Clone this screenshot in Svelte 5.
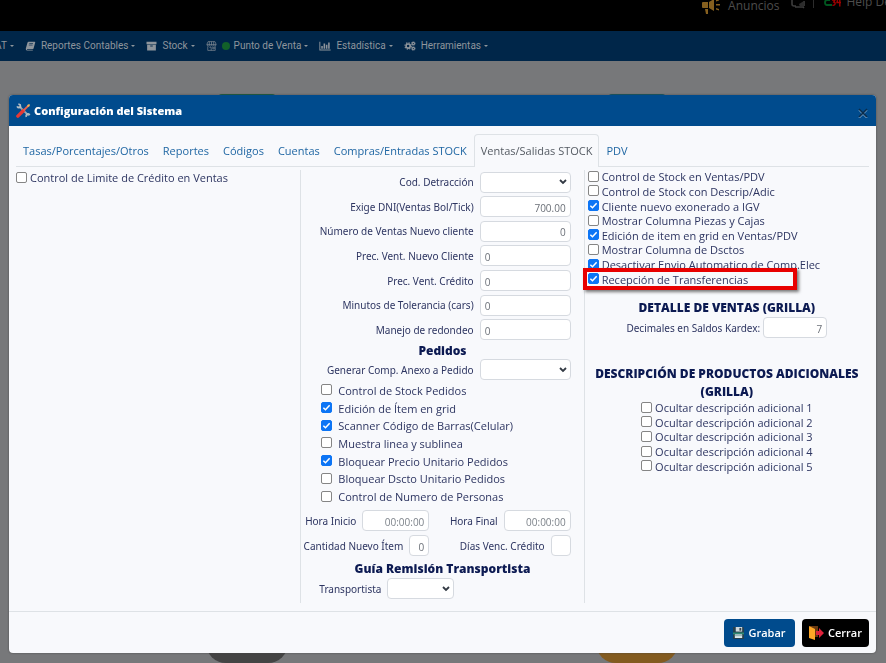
<script lang="ts">
  type Check = { id: string; label: string; checked: boolean; marked?: boolean };
  type Field = { id: string; label: string; value?: string; align?: 'left' | 'right'; select?: boolean };

  const menus = [
    { icon: '', label: 'AT' },
    { icon: 'book', label: 'Reportes Contables' },
    { icon: 'box', label: 'Stock' },
    { icon: 'store', label: 'Punto de Venta' },
    { icon: 'chart', label: 'Estadística' },
    { icon: 'cogs', label: 'Herramientas' }
  ];

  const tabs = [
    'Tasas/Porcentajes/Otros',
    'Reportes',
    'Códigos',
    'Cuentas',
    'Compras/Entradas STOCK',
    'Ventas/Salidas STOCK',
    'PDV'
  ];
  let active = $state('Ventas/Salidas STOCK');

  let credito: Check[] = $state([
    { id: 'limite', label: 'Control de Limite de Crédito en Ventas', checked: false }
  ]);

  let campos: Field[] = $state([
    { id: 'detraccion', label: 'Cod. Detracción', select: true },
    { id: 'dni', label: 'Exige DNI(Ventas Bol/Tick)', value: '700.00', align: 'right' },
    { id: 'nventas', label: 'Número de Ventas Nuevo cliente', value: '0', align: 'right' },
    { id: 'precnuevo', label: 'Prec. Vent. Nuevo Cliente', value: '0' },
    { id: 'preccred', label: 'Prec. Vent. Crédito', value: '0' },
    { id: 'tolerancia', label: 'Minutos de Tolerancia (cars)', value: '0' },
    { id: 'redondeo', label: 'Manejo de redondeo', value: '0' }
  ]);

  let pedidos: Check[] = $state([
    { id: 'stockped', label: 'Control de Stock Pedidos', checked: false },
    { id: 'edicion', label: 'Edición de Ítem en grid', checked: true },
    { id: 'scanner', label: 'Scanner Código de Barras(Celular)', checked: true },
    { id: 'linea', label: 'Muestra linea y sublinea', checked: false },
    { id: 'precio', label: 'Bloquear Precio Unitario Pedidos', checked: true },
    { id: 'dscto', label: 'Bloquear Dscto Unitario Pedidos', checked: false },
    { id: 'personas', label: 'Control de Numero de Personas', checked: false }
  ]);

  let ventas: Check[] = $state([
    { id: 'stockpdv', label: 'Control de Stock en Ventas/PDV', checked: false },
    { id: 'descrip', label: 'Control de Stock con Descrip/Adic', checked: false },
    { id: 'igv', label: 'Cliente nuevo exonerado a IGV', checked: true },
    { id: 'piezas', label: 'Mostrar Columna Piezas y Cajas', checked: false },
    { id: 'itempdv', label: 'Edición de item en grid en Ventas/PDV', checked: true },
    { id: 'dsctos', label: 'Mostrar Columna de Dsctos', checked: false },
    { id: 'envio', label: 'Desactivar Envio Automatico de Comp.Elec', checked: true },
    { id: 'transf', label: 'Recepción de Transferencias', checked: true, marked: true }
  ]);

  let ocultar: Check[] = $state(
    [1, 2, 3, 4, 5].map((n) => ({ id: `ocultar${n}`, label: `Ocultar descripción adicional ${n}`, checked: false }))
  );
</script>

{#snippet checks(items: Check[], kind: string)}
  <div class="checks {kind}">
    {#each items as item (item.id)}
      <div class="check" class:marked={item.marked}>
        <input type="checkbox" id={item.id} bind:checked={item.checked} />
        <label for={item.id}>{item.label}</label>
      </div>
    {/each}
  </div>
{/snippet}

{#snippet menuIcon(name: string)}
  {#if name === 'book'}
    <svg viewBox="0 0 16 16" class="icon"><path d="M5 1h9.500q1.500 0 1 1.500l-2.500 9q-.4 1.500-2 1.500H3q-1 0-.8.8.2.5 1 .5h8.500v1H2.500Q0 15 .5 12L3 3q.5-2 2-2z" /><path d="M6 4h6M5.300 6.500h6" stroke="#002649" /></svg>
  {:else if name === 'box'}
    <svg viewBox="0 0 16 16" class="icon"><path d="M0 1h16v4H0zM1 6h14v9H1z" /><path d="M6 8h4" stroke="#002649" stroke-width="1.500" /></svg>
  {:else if name === 'store'}
    <svg viewBox="0 0 16 16" class="icon line"><path d="M2.500 1h11l2 4.500H.5zM1 5.500v1.500q2 2 3.500 0 1.800 2 3.500 0 1.800 2 3.500 0 1.800 2 3.500 0V5.500M2 8.500V15h12V8.500M4.500 1v5M8 1v5M11.500 1v5M4.500 10h3v5M10 10h2.500v2.500H10z" /></svg>
    <span class="dot"></span>
  {:else if name === 'chart'}
    <svg viewBox="0 0 18 16" class="icon wide"><path d="M0 1h1.500v12.500H18V15H0zM3 8h2.500v4.500H3zM6.700 4h2.500v8.500H6.700zM10.400 6h2.500v6.500h-2.500zM14 2.500h2.500v10H14z" /></svg>
  {:else if name === 'cogs'}
    <svg viewBox="0 0 18 16" class="icon wide">
      <circle cx="6" cy="8" r="3.300" fill="none" stroke="currentColor" stroke-width="2.600" />
      <circle cx="6" cy="8" r="5.100" fill="none" stroke="currentColor" stroke-width="1.800" stroke-dasharray="2.200 1.800" />
      <circle cx="14.300" cy="4" r="1.900" fill="none" stroke="currentColor" stroke-width="1.800" />
      <circle cx="14.300" cy="4" r="3.100" fill="none" stroke="currentColor" stroke-width="1" stroke-dasharray="1.400 1" />
      <circle cx="14.300" cy="12" r="1.900" fill="none" stroke="currentColor" stroke-width="1.800" />
      <circle cx="14.300" cy="12" r="3.100" fill="none" stroke="currentColor" stroke-width="1" stroke-dasharray="1.400 1" />
    </svg>
  {/if}
{/snippet}

<div class="page">
  <header class="topbar">
    <a href="#anuncios">
      <svg viewBox="0 0 18 15" class="horn"><path fill="#86601f" d="M1 3h5v6H1Q0 9 0 8V4q0-1 1-1zM7 3l5-3v12L7 9zM3 10h3v5H4zM14 1l3-1v1.500l-3 1zM14 5h4v1.500h-4zM14 9l3 1v1.500l-3-1z" /></svg>
      <span>Anuncios</span>
    </a>
    <svg viewBox="0 0 14 9" class="chat"><path d="M1 0v4q0 2 2 2h2M13 1v5M4 7h8l1 1" fill="none" stroke="#3c3c3c" stroke-width="1.600" /><path d="M8 4l5-3v6H9z" fill="#2c2c2c" /></svg>
    <span class="rule"></span>
    <a href="#helpdesk" class="help">
      <svg viewBox="0 0 18 8" class="brand">
        <path d="M6 0H3Q1 0 1 2.500T3 5h5" fill="none" stroke="#00561f" stroke-width="1.800" />
        <path d="M8 0h3L9.800 2q2 .5 1 2.500-.8 1-2.300.8M13.500 0l-.5 2.500h4M15.800 0v6.500" fill="none" stroke="#a00000" stroke-width="1.400" />
      </svg>
      <span>Help De</span>
    </a>
  </header>

  <nav class="menu">
    {#each menus as menu (menu.label)}
      <button type="button">
        {@render menuIcon(menu.icon)}
        <span>{menu.label}</span>
        <i class="caret"></i>
      </button>
    {/each}
  </nav>

  <main class="tiles">
    <span class="tile green"></span>
    <span class="tile teal"></span>
    <span class="tile dark"></span>
    <span class="tile amber"></span>
  </main>
</div>

<div class="backdrop">
  <div class="modal" role="dialog" aria-labelledby="titulo">
    <header class="modal-head">
      <svg viewBox="0 0 16 16" class="tools">
        <path d="M3 3l10.500 10.500" stroke="#9aa7b0" stroke-width="2" />
        <path d="M1 3.500Q2.500 6 5 4.500L4.500 2 2.500 1M11 15q-1-3 2-3.500l2 1" fill="none" stroke="#b4bec5" stroke-width="1.600" />
        <path d="M2 14l6-6" stroke="#e53935" stroke-width="3.600" stroke-linecap="round" />
        <path d="M8 8l5-5" stroke="#e8604c" stroke-width="2" />
        <path d="M12 2l2-1 1 1-1 2-2 0z" fill="#f0b35a" />
      </svg>
      <h1 id="titulo">Configuración del Sistema</h1>
      <button type="button" class="close" aria-label="Cerrar ventana">
        <svg viewBox="0 0 10 10"><path d="M1 2l8 8M9 2L1 10" fill="none" stroke="#6f9cc4" stroke-width="1.600" /><path d="M1 1l8 8M9 1L1 9" fill="none" stroke="#0a2c4c" stroke-width="1.600" /></svg>
      </button>
    </header>

    <div class="modal-body">
      <div class="tabs" role="tablist">
        {#each tabs as tab (tab)}
          <button type="button" role="tab" class:active={tab === active} aria-selected={tab === active} onclick={() => (active = tab)}>{tab}</button>
        {/each}
      </div>

      <div class="columns">
        <section>
          {@render checks(credito, 'tight')}
        </section>

        <section class="middle">
          <div class="fields">
            {#each campos as campo (campo.id)}
              <label for={campo.id}>{campo.label}</label>
              {#if campo.select}
                <select id={campo.id}><option></option></select>
              {:else}
                <input type="text" id={campo.id} class:right={campo.align === 'right'} bind:value={campo.value} />
              {/if}
            {/each}
          </div>

          <h2>Pedidos</h2>
          <div class="fields single">
            <label for="anexo">Generar Comp. Anexo a Pedido</label>
            <select id="anexo"><option></option></select>
          </div>
          {@render checks(pedidos, 'loose')}

          <div class="pair">
            <span class="group">
              <label for="inicio">Hora Inicio</label>
              <input type="text" id="inicio" class="time right" placeholder="00:00:00" />
            </span>
            <span class="group">
              <label for="final">Hora Final</label>
              <input type="text" id="final" class="time right" placeholder="00:00:00" />
            </span>
          </div>
          <div class="pair">
            <span class="group">
              <label for="cantidad">Cantidad Nuevo Ítem</label>
              <input type="text" id="cantidad" class="tiny right" value="0" />
            </span>
            <span class="group">
              <label for="dias">Días Venc. Crédito</label>
              <input type="text" id="dias" class="tiny right" />
            </span>
          </div>

          <h2>Guía Remisión Transportista</h2>
          <div class="transport">
            <label for="transportista">Transportista</label>
            <select id="transportista"><option></option></select>
          </div>
        </section>

        <section>
          {@render checks(ventas, 'list')}
          <h2 class="detail">DETALLE DE VENTAS (GRILLA)</h2>
          <div class="decimals">
            <label for="kardex">Decimales en Saldos Kardex:</label>
            <input type="text" id="kardex" class="right" value="7" />
          </div>
          <h2 class="extra">DESCRIPCIÓN DE PRODUCTOS ADICIONALES (GRILLA)</h2>
          {@render checks(ocultar, 'hide')}
        </section>
      </div>
    </div>

    <footer class="modal-foot">
      <button type="button" class="save">
        <svg viewBox="0 0 12 14"><path fill="#263f4d" d="M0 1h11l1 1v12H0z" /><path fill="#cfd8dc" d="M3 1h7v5H3z" /><path fill="#37474f" d="M7 2h2v3H7z" /><path fill="#2e8b74" d="M0 7h12v2H0z" /><path fill="#dfe9ec" d="M2 9h8v4H2z" /><path fill="#7fa8a8" d="M2 10h8v1H2z" /></svg>
        <span>Grabar</span>
      </button>
      <button type="button" class="exit">
        <svg viewBox="0 0 15 14"><path fill="#6b3a10" d="M1 0h8v11H1z" /><path fill="#ffa726" d="M0 0l6 3v11l-6-2z" /><path fill="#e0223b" d="M7 5h3V2l5 5-5 5V9H7z" /></svg>
        <span>Cerrar</span>
      </button>
    </footer>
  </div>
</div>

<style>
  :global(body) {
    background: #77787a;
    font-family: "Open Sans", "Noto Sans", sans-serif;
    overflow: hidden;
  }

  .page {
    display: flex;
    flex-direction: column;
    height: 100vh;
    overflow: hidden;
  }

  button {
    font-family: inherit;
    border: 0;
    background: none;
    padding: 0;
    cursor: pointer;
  }

  /* top bar */
  .topbar {
    display: flex;
    justify-content: flex-end;
    align-items: flex-start;
    flex: none;
    height: 31px;
    background: #000;
    overflow: hidden;
    font-size: 12px;
    line-height: 12px;
  }

  .topbar a {
    display: flex;
    gap: 8px;
    color: #4d4d4d;
    text-decoration: none;
    white-space: nowrap;
  }

  .topbar .help {
    gap: 4px;
    margin-right: -5px;
  }

  .help span {
    margin-top: -4px;
  }

  .horn {
    width: 18px;
    height: 15px;
    margin-top: -1px;
  }

  .chat {
    width: 14px;
    height: 9px;
    margin-left: 12px;
  }

  .rule {
    width: 1px;
    height: 8px;
    margin: 0 10px 0 8px;
    background: #2c2c2c;
  }

  .brand {
    width: 18px;
    height: 8px;
  }

  /* menu */
  .menu {
    display: flex;
    align-items: center;
    gap: 11px;
    flex: none;
    height: 30px;
    margin-left: -5px;
    background: #002649;
    overflow: hidden;
  }

  .menu button {
    display: flex;
    align-items: center;
    color: #8e959c;
    font-family: Roboto, "Open Sans", sans-serif;
    font-size: 10px;
    line-height: 16px;
    white-space: nowrap;
  }

  .icon {
    width: 11px;
    height: 10px;
    margin-right: 5px;
    fill: currentColor;
  }

  .icon.line {
    fill: none;
    stroke: currentColor;
  }

  .icon.wide {
    width: 12px;
  }

  .dot {
    width: 8px;
    height: 8px;
    margin-right: 4px;
    border-radius: 50%;
    background: #12612a;
  }

  .caret {
    margin-left: 3px;
    border: 2px solid transparent;
    border-top-color: currentColor;
    border-bottom: 0;
  }

  /* shortcuts behind the dialog */
  .tiles {
    display: grid;
    grid-template-columns: 1fr 1fr;
    align-content: space-between;
    justify-items: center;
    flex: 1;
    padding: 33px 54px 0 52px;
  }

  .tile {
    width: 58px;
    height: 20px;
    border-radius: 4px;
  }

  .green { background: #145c3d; }
  .teal { background: #0b5563; }

  .tile.dark,
  .tile.amber {
    width: 82px;
    height: 40px;
    border-radius: 20px;
    background: #444;
  }

  .tile.amber {
    background: #835b20;
  }

  /* dialog */
  .backdrop {
    position: fixed;
    inset: 0;
    display: flex;
    padding: 95px 10px 10px 9px;
  }

  .modal {
    display: flex;
    flex-direction: column;
    flex: 1;
    min-width: 0;
    border-radius: 4px;
    background: #f8f9fc;
    box-shadow: 0 0 2px #444;
    overflow: hidden;
    color: #2d3561;
  }

  .modal-head {
    display: flex;
    align-items: center;
    gap: 3px;
    height: 31px;
    padding: 0 7px;
    background: #004b8d;
    color: #fff;
  }

  .tools {
    width: 15px;
    height: 15px;
  }

  h1 {
    margin: 0;
    flex: 1;
    font-size: 11px;
    font-weight: 800;
    line-height: 16px;
  }

  .close {
    width: 12px;
    height: 12px;
    line-height: 0;
    margin-top: 4px;
  }

  .close svg {
    width: 10px;
    height: 10px;
  }

  .modal-body {
    flex: 1;
    padding: 8px 7px 0;
  }

  .tabs {
    display: flex;
    height: 32px;
    border-bottom: 1px solid #dee2e6;
  }

  .tabs button {
    height: 33px;
    padding: 0 6px 2px;
    border: 1px solid transparent;
    border-bottom: 0;
    border-radius: 4px 4px 0 0;
    color: #1f66a3;
    font-size: 11px;
    white-space: nowrap;
  }

  .tabs .active {
    border-color: #dee2e6;
    background: #f8f9fc;
    color: #555b63;
  }

  .columns {
    display: grid;
    grid-template-columns: repeat(3, 1fr);
    margin-top: 3px;
  }

  section {
    min-width: 0;
  }

  .middle {
    height: 433px;
    border-left: 1px solid #dee2e6;
    border-right: 1px solid #dee2e6;
  }

  h2 {
    margin: 0;
    color: #0c1a52;
    font-size: 12px;
    font-weight: 800;
    line-height: 18px;
    text-align: center;
  }

  label {
    font-family: "Noto Sans", "Open Sans", sans-serif;
    font-size: 10px;
    line-height: 14px;
    white-space: nowrap;
  }

  .check label {
    font-family: inherit;
    font-size: 11px;
  }

  .checks {
    display: grid;
  }

  .check {
    position: relative;
    display: flex;
    align-items: center;
    gap: 3px;
  }

  .tight {
    height: 16px;
  }

  .list {
    height: 117px;
    padding-left: 3px;
  }

  .loose {
    height: 124px;
    padding-left: 20px;
  }

  .loose .check {
    gap: 6px;
  }

  .hide {
    height: 73px;
    justify-content: center;
  }

  .marked::after {
    content: "";
    position: absolute;
    top: -4px;
    left: -5px;
    width: 206px;
    height: 14px;
    border: 4px solid #e80000;
    box-shadow: 2px 2px 3px #777;
    pointer-events: none;
  }

  input[type="checkbox"] {
    appearance: none;
    width: 11px;
    height: 11px;
    margin: 0 0 2px;
    border: 1px solid #858585;
    border-radius: 2px;
    background: #fff;
  }

  input[type="checkbox"]:checked {
    border-color: #0d75f5;
    background: #0d75f5 url("data:image/svg+xml,%3Csvg xmlns='http://www.w3.org/2000/svg' viewBox='0 0 10 10'%3E%3Cpath d='M1.500 5.200l2.400 2.300 4.600-5' fill='none' stroke='white' stroke-width='1.700'/%3E%3C/svg%3E");
  }

  input[type="text"],
  select {
    box-sizing: border-box;
    width: 91px;
    height: 21px;
    margin: 0;
    padding: 2px 4px 0;
    border: 1px solid #d6dae0;
    border-radius: 4px;
    background: #fff;
    color: #6b7078;
    font-family: inherit;
    font-size: 10px;
  }

  input::placeholder {
    color: #7d838a;
  }

  select {
    appearance: none;
    background: #fff url("data:image/svg+xml,%3Csvg xmlns='http://www.w3.org/2000/svg' viewBox='0 0 8 6'%3E%3Cpath d='M1 1l3 3 3-3' fill='none' stroke='%23333a44' stroke-width='1.800'/%3E%3C/svg%3E") no-repeat right 3px center / 8px 6px;
  }

  .right {
    text-align: right;
  }

  .fields {
    display: grid;
    grid-template-columns: 1fr auto;
    align-items: center;
    column-gap: 6px;
    height: 172px;
    padding-right: 13px;
    justify-items: end;
  }

  .middle h2 {
    line-height: 17px;
  }

  .fields.single {
    height: 21px;
    margin-bottom: 2px;
  }

  .pair {
    display: flex;
    justify-content: space-between;
    height: 21px;
    margin: 4px 0;
    padding: 0 13px 0 3px;
  }

  .group {
    display: flex;
    align-items: center;
    justify-content: flex-end;
    gap: 6px;
  }

  .pair .group:first-child {
    width: 125px;
  }

  input.time {
    width: 67px;
  }

  input.tiny {
    width: 20px;
  }

  .transport {
    display: flex;
    align-items: center;
    gap: 6px;
    margin-top: 1px;
    padding-left: 18px;
  }

  .transport select {
    width: 67px;
  }

  h2.detail {
    margin-top: 12px;
  }

  .decimals {
    display: flex;
    align-items: center;
    justify-content: center;
    gap: 3px;
  }

  .decimals input {
    width: 64px;
  }

  h2.extra {
    margin: 27px 0 0;
    padding: 0 8px;
  }

  .modal-foot {
    display: flex;
    align-items: center;
    justify-content: flex-end;
    gap: 7px;
    height: 41px;
    padding-right: 7px;
    border-top: 1px solid #dee2e6;
  }

  .modal-foot button {
    display: flex;
    align-items: center;
    justify-content: center;
    gap: 4px;
    height: 28px;
    border-radius: 4px;
    color: #fff;
    font-size: 11px;
    font-weight: 600;
  }

  .save {
    width: 71px;
    background: #004b8d;
  }

  .exit {
    width: 67px;
    background: #000;
  }

  .save svg {
    width: 11px;
    height: 13px;
  }

  .exit svg {
    width: 15px;
    height: 14px;
  }
</style>
